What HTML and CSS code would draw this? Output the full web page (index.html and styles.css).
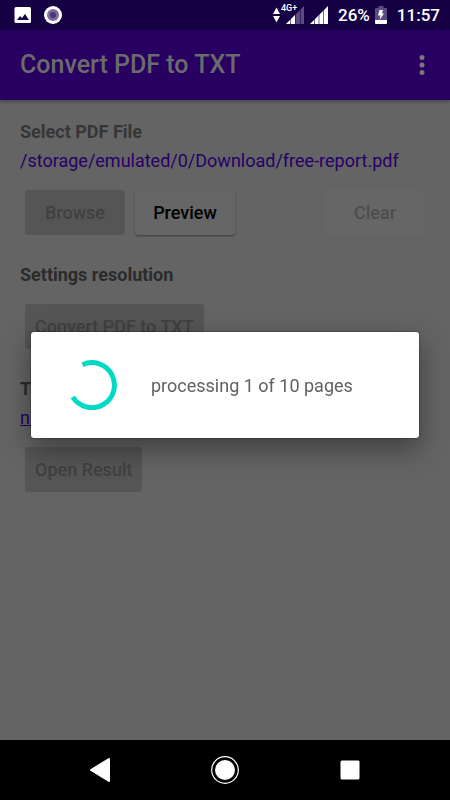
FILE: index.html
```
<!DOCTYPE html>
<html lang="en">
<head>
	<meta charset="UTF-8">
	<meta name="viewport" content="width=device-width, initial-scale=1">
	<title>Convert PDF to TXT</title>
	<link rel="stylesheet" href="styles.css">
</head>
<body>
	<div class="status">
		<div class="status-left">
			<svg width="18" height="18" viewBox="0 0 18 18">
				<rect x="0.500" y="1" width="16.500" height="16" rx="1.500" fill="#fff"/>
				<path d="M3 14l3-4 2 2 3-4 4 6z" fill="#160044"/>
			</svg>
			<svg width="18" height="18" viewBox="0 0 18 18">
				<circle cx="9" cy="9" r="9" fill="#fff"/>
				<circle cx="9" cy="9" r="6" fill="#7b6b9f"/>
				<circle cx="9" cy="9" r="3" fill="#4a3873"/>
			</svg>
		</div>
		<div class="status-right">
			<svg width="55" height="24" viewBox="0 0 55 24">
				<path d="M0 11L3.500 4.500 7 11zM0 13h7l-3.500 6.500z" fill="#fff"/>
				<text x="8" y="8" class="net">4G+</text>
				<path d="M31 3v18H13z" fill="#5c4b82"/>
				<path d="M22 12v9h-9z" fill="#fff"/>
				<path d="M55 3v18H37z" fill="#fff"/>
				<path d="M17.500 16v5M22.500 11v10M27.500 7v14M41.500 16v5M46 11v10M50.500 6v15" stroke="#160044" stroke-width="0.600"/>
			</svg>
			<span>26%</span>
			<svg class="battery" width="12" height="18" viewBox="0 0 12 18">
				<path d="M1 2h2.500V0h5v2H11q1 0 1 1v11H0V3q0-1 1-1z" fill="#5c4b82"/>
				<path d="M0 14h12v3q0 1-1 1H1q-1 0-1-1z" fill="#fff"/>
				<path d="M4.500 4H8L7 7.500h2L4.500 14l1-4.500H3z" fill="#fff"/>
			</svg>
			<span>11:57</span>
		</div>
	</div>

	<header>
		<h1>Convert PDF to TXT</h1>
		<button class="more" aria-label="More options">
			<svg width="6" height="20" viewBox="0 0 6 20" fill="#777">
				<circle cx="3" cy="2.500" r="2.500"/>
				<circle cx="3" cy="10" r="2.500"/>
				<circle cx="3" cy="17.500" r="2.500"/>
			</svg>
		</button>
	</header>

	<main>
		<section>
			<h2>Select PDF File</h2>
			<p class="path">/storage/emulated/0/Download/free-report.pdf</p>
			<div class="buttons">
				<button class="btn" disabled>Browse</button>
				<button class="btn preview">Preview</button>
				<button class="btn clear" disabled>Clear</button>
			</div>
		</section>
		<section>
			<h2 class="dark">Settings resolution</h2>
			<div class="buttons">
				<button class="btn" disabled>Convert PDF to TXT</button>
			</div>
		</section>
		<section>
			<h2 class="dark">Text File</h2>
			<a class="path" href="#">no file</a>
			<div class="buttons">
				<button class="btn" disabled>Open Result</button>
			</div>
		</section>
	</main>

	<nav>
		<button aria-label="Back">
			<svg width="30" height="30" viewBox="0 0 30 30">
				<path d="M6 15L24 4v22z" fill="#fff" stroke="#fff" stroke-width="2" stroke-linejoin="round"/>
			</svg>
		</button>
		<button aria-label="Home">
			<svg width="30" height="30" viewBox="0 0 30 30">
				<circle cx="15" cy="15" r="13.300" fill="none" stroke="#fff" stroke-width="1.200"/>
				<circle cx="15" cy="15" r="10" fill="#fff"/>
			</svg>
		</button>
		<button aria-label="Recent apps">
			<svg width="30" height="30" viewBox="0 0 30 30">
				<rect x="5.500" y="5.500" width="19" height="19" rx="1.500" fill="#fff"/>
			</svg>
		</button>
	</nav>

	<div class="overlay">
		<div class="dialog" role="dialog" aria-label="Progress">
			<svg width="50" height="50" viewBox="0 0 50 50">
				<path d="M15.500 4.700A22.500 22.500 0 1 1 5.800 37" fill="none" stroke="#00dac5" stroke-width="5"/>
			</svg>
			<span>processing 1 of 10 pages</span>
		</div>
	</div>
</body>
</html>
```

FILE: styles.css
```
* {
	box-sizing: border-box;
}

body {
	margin: 0;
	min-height: 100vh;
	display: flex;
	flex-direction: column;
	background: #646464;
	font-family: Roboto, sans-serif;
	font-size: 18px;
}

h1, h2, p {
	margin: 0;
}

button {
	font: inherit;
	border: 0;
	padding: 0;
	background: none;
}

svg {
	display: block;
}

.status {
	height: 30px;
	padding: 0 10px 0 14px;
	display: flex;
	justify-content: space-between;
	align-items: center;
	background: #160044;
	color: #fff;
	font-weight: 500;
}

.status-left {
	display: flex;
	gap: 12px;
}

.status-right {
	display: flex;
	align-items: center;
	gap: 10px;
	font-size: 17px;
	line-height: 30px;
}

.battery {
	margin-left: -5px;
}

.net {
	font-size: 9px;
	font-weight: 500;
	fill: #fff;
}

header {
	height: 70px;
	padding: 0 25px 0 20px;
	display: flex;
	justify-content: space-between;
	align-items: center;
	background: #280061;
	box-shadow: 0 1px 4px rgba(0, 0, 0, 0.4);
}

h1 {
	color: #6b6b6b;
	font-size: 25px;
	font-weight: 500;
	line-height: 30px;
}

main {
	flex: 1;
	padding: 20px;
	display: flex;
	flex-direction: column;
	gap: 28px;
}

h2 {
	color: #363636;
	font-size: 18px;
	font-weight: 700;
	line-height: 24px;
}

.dark {
	color: #2b2b2b;
}

.path {
	display: block;
	margin-top: 5px;
	color: #270068;
	line-height: 24px;
}

.buttons {
	display: flex;
	gap: 10px;
	margin-top: 17px;
	padding: 0 5px;
}

.btn {
	min-width: 100px;
	height: 45px;
	padding: 0 10px;
	border-radius: 3px;
	background: #555;
	color: #404040;
	font-weight: 500;
}

.preview {
	background: #666;
	color: #000;
	box-shadow: 0 1px 2px rgba(0, 0, 0, 0.4);
}

.clear {
	margin-left: auto;
	background: #666;
	color: #4d4d4d;
}

nav {
	height: 60px;
	padding: 0 37px;
	display: flex;
	background: #000;
}

nav button {
	flex: 1;
	display: flex;
	justify-content: center;
	align-items: center;
}

/* progress dialog */
.overlay {
	position: fixed;
	top: 30px;
	right: 0;
	bottom: 60px;
	left: 0;
	padding: 0 31px;
	display: flex;
	align-items: center;
}

.dialog {
	flex: 1;
	padding: 28px 36px;
	display: flex;
	align-items: center;
	gap: 34px;
	border-radius: 3px;
	background: #fff;
	color: #616161;
	box-shadow: 0 0 2px rgba(0, 0, 0, 0.6), 0 10px 28px rgba(0, 0, 0, 0.4);
}
```
